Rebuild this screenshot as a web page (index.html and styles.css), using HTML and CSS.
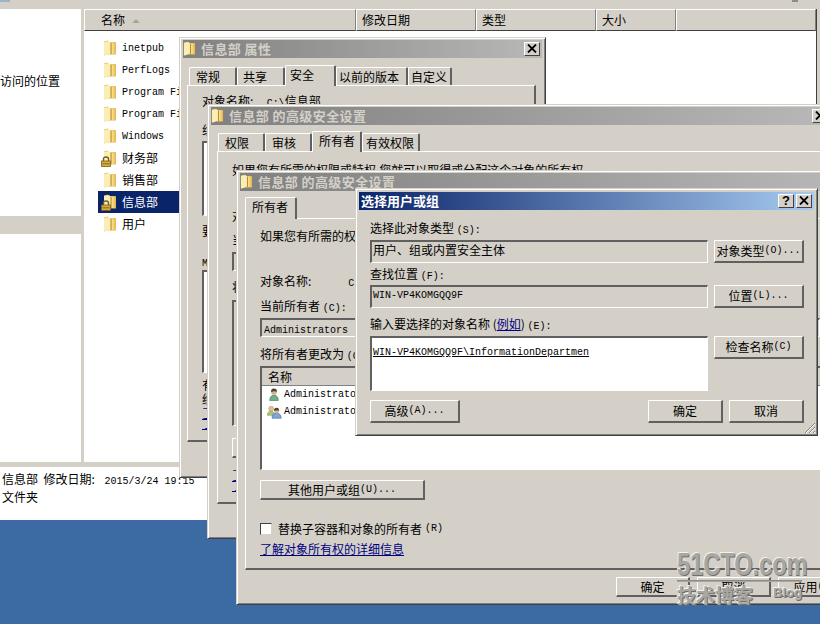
FILE: index.html
```html
<!DOCTYPE html>
<html lang="zh-CN">
<head>
  <meta charset="UTF-8" />
  <title>信息部 属性</title>
  <link rel="stylesheet" href="styles.css">
</head>
<body>

  <!-- icons -->
  <svg class="sprite" width="0" height="0">
    <defs>
      <linearGradient id="folderFill" x1="0" y1="0" x2="1" y2="0">
        <stop offset="0" stop-color="#fdf0b0"/>
        <stop offset="0.55" stop-color="#f6dc86"/>
        <stop offset="1" stop-color="#e8bb52"/>
      </linearGradient>
      <symbol id="folder" viewBox="0 0 14 16">
        <path d="M1 1.5 L5 0.5 L5 2 L12.5 2 L13 3 L13 14.5 L5 14.5 L1 15.5 Z" fill="#e2b655"/>
        <path d="M6 2.5 L12.5 2.5 L12.5 14 L6 14 Z" fill="url(#folderFill)"/>
        <path d="M1 2 L6 1 L7.5 2.5 L7.5 13.5 L2 15.5 L1 15 Z" fill="#fbeeb4"/>
        <path d="M7.5 2.5 L8.6 3 L8.6 14 L7.5 14 Z" fill="#b98a2c"/>
      </symbol>
      <symbol id="lock" viewBox="0 0 10 11">
        <path d="M2.5 5 L2.5 3 Q2.5 1 5 1 Q7.5 1 7.5 3 L7.5 5" fill="none" stroke="#6a5a30" stroke-width="1.4"/>
        <rect x="0.5" y="5" width="9" height="5.5" fill="#d8a93c" stroke="#7a5f18" stroke-width="0.8"/>
        <rect x="1.5" y="7.3" width="7" height="1" fill="#8a6c1e"/>
      </symbol>
      <symbol id="user" viewBox="0 0 14 16">
        <path d="M2 15 Q2 9 7 9 Q12 9 12 15 Z" fill="#6fb08a" stroke="#3f7a5a" stroke-width="0.7"/>
        <circle cx="7" cy="5" r="3.4" fill="#d9b28a"/>
        <path d="M3.6 5 Q3.4 1 7 1 Q10.6 1 10.4 5 Q8.6 3.2 3.6 5 Z" fill="#4a4238"/>
      </symbol>
      <symbol id="group" viewBox="0 0 18 16">
        <path d="M0.5 12 Q0.5 7 4.5 7 Q9 7 9 12 Z" fill="#a8c47c" stroke="#6e8c4c" stroke-width="0.6"/>
        <circle cx="5" cy="4" r="3" fill="#e4bf92" stroke="#a68a5e" stroke-width="0.5"/>
        <path d="M6 15.5 Q6 9.5 11.5 9.5 Q17 9.5 17 15.5 Z" fill="#7ea6d6" stroke="#41699c" stroke-width="0.7"/>
        <circle cx="11.5" cy="6.5" r="3" fill="#d9b28a"/>
        <path d="M8.5 6.5 Q8.3 3 11.5 3 Q14.7 3 14.5 6.5 Q12.8 5 8.5 6.5 Z" fill="#4a4238"/>
      </symbol>
      <symbol id="close" viewBox="0 0 10 9">
        <path d="M1 0.5 L9 8.5 M9 0.5 L1 8.5" stroke="#000" stroke-width="1.8" fill="none"/>
      </symbol>
    </defs>
  </svg>

  <!-- explorer behind the dialogs -->
  <div class="explorer">
    <div class="toolbar-strip">
      <span class="strip-bit"></span>
      <span class="strip-bit strip-bit-right"></span>
    </div>
    <div class="explorer-body">
      <div class="nav">
        <div class="nav-top"><span class="nav-label">访问的位置</span></div>
        <div class="nav-gap"></div>
        <div class="nav-bottom"></div>
      </div>
      <div class="files">
        <div class="file-head">
          <div class="col col-name">名称 <span class="sort-arrow"></span></div>
          <div class="col col-date">修改日期</div>
          <div class="col col-type">类型</div>
          <div class="col col-size">大小</div>
          <div class="col col-rest"></div>
        </div>
        <ul class="file-list">
          <li><svg class="folder-icon"><use href="#folder"/></svg><span class="m">inetpub</span></li>
          <li><svg class="folder-icon"><use href="#folder"/></svg><span class="m">PerfLogs</span></li>
          <li><svg class="folder-icon"><use href="#folder"/></svg><span class="m">Program Files</span></li>
          <li><svg class="folder-icon"><use href="#folder"/></svg><span class="m">Program Files (x86)</span></li>
          <li><svg class="folder-icon"><use href="#folder"/></svg><span class="m">Windows</span></li>
          <li><span class="icon-wrap"><svg class="folder-icon"><use href="#folder"/></svg><svg class="lock-icon"><use href="#lock"/></svg></span>财务部</li>
          <li><svg class="folder-icon"><use href="#folder"/></svg>销售部</li>
          <li class="selected"><span class="icon-wrap"><svg class="folder-icon"><use href="#folder"/></svg><svg class="lock-icon"><use href="#lock"/></svg></span>信息部</li>
          <li><svg class="folder-icon"><use href="#folder"/></svg>用户</li>
        </ul>
      </div>
    </div>
    <div class="status">
      <div>信息部&nbsp; 修改日期: <span class="m status-date">2015/3/24 19:15</span></div>
      <div>文件夹</div>
    </div>
  </div>

  <!-- 属性 -->
  <div class="win win-props">
    <div class="titlebar">
      <svg class="title-icon"><use href="#folder"/></svg>
      <span class="title-text">信息部&nbsp;属性</span>
      <span class="title-btn"><svg class="x-icon"><use href="#close"/></svg></span>
    </div>
    <div class="tabs tabs-props">
      <div class="tab">常规</div>
      <div class="tab">共享</div>
      <div class="tab active">安全</div>
      <div class="tab">以前的版本</div>
      <div class="tab">自定义</div>
    </div>
    <div class="panel panel-props">
      <p class="line">对象名称:&nbsp;&nbsp;&nbsp;&nbsp; <span class="m">C:\</span>信息部</p>
      <p class="line props-group">组或用户名(G):</p>
      <div class="sunken white box-a"></div>
      <p class="line props-change">要更改权限,请单击“编辑”。</p>
      <p class="line props-perm"><span class="m">MyUser</span> 的权限(P)</p>
      <div class="sunken white box-b"></div>
      <p class="line props-more">有关特殊权限或高级设置,<br>经单击“高级”。</p>
      <a class="link-line props-link1">了解访问控制和权限</a>
      <a class="link-line props-link2">了解访问控制和权限</a>
    </div>
  </div>

  <!-- 高级安全设置 -->
  <div class="win win-adv">
    <div class="titlebar">
      <svg class="title-icon"><use href="#folder"/></svg>
      <span class="title-text">信息部&nbsp;的高级安全设置</span>
      <span class="title-btn"><svg class="x-icon"><use href="#close"/></svg></span>
    </div>
    <div class="tabs tabs-adv">
      <div class="tab">权限</div>
      <div class="tab">审核</div>
      <div class="tab active">所有者</div>
      <div class="tab">有效权限</div>
    </div>
    <div class="panel panel-adv">
      <p class="line">如果您有所需的权限或特权,您就可以取得或分配这个对象的所有权。</p>
      <p class="line adv-name">对象名称:</p>
      <p class="line adv-cur">当前所有者(C):</p>
      <div class="sunken adv-box"></div>
      <p class="line adv-chg">将所有者更改为(O):</p>
      <div class="sunken adv-list"></div>
      <div class="btn adv-btn"></div>
      <a class="link-line adv-link1">了解</a>
      <a class="link-line adv-link2">了解</a>
    </div>
  </div>

  <!-- 高级安全设置 / 所有者 -->
  <div class="win win-owner">
    <div class="titlebar">
      <svg class="title-icon"><use href="#folder"/></svg>
      <span class="title-text">信息部&nbsp;的高级安全设置</span>
    </div>
    <div class="tabs tabs-owner">
      <div class="tab active">所有者</div>
    </div>
    <div class="panel panel-owner">
      <p class="line">如果您有所需的权限或特权,您就可以取得或分配这个对象的所有权。</p>
      <p class="line owner-name">对象名称:<span class="owner-path m">C:\</span></p>
      <p class="line owner-cur">当前所有者 <span class="m">(C):</span></p>
      <div class="sunken owner-box"><span class="m">Administrators</span></div>
      <p class="line owner-chg">将所有者更改为 <span class="m">(O):</span></p>
      <div class="sunken white owner-list">
        <div class="list-head">名称</div>
        <div class="list-row"><svg class="row-icon"><use href="#user"/></svg><span class="m">Administrator</span></div>
        <div class="list-row"><svg class="row-icon row-icon-group"><use href="#group"/></svg><span class="m">Administrators</span></div>
      </div>
      <div class="btn owner-other">其他用户或组 <span class="m">(U)...</span></div>
      <label class="check-row"><span class="checkbox"></span>替换子容器和对象的所有者 <span class="m">(R)</span></label>
      <a class="link owner-link">了解对象所有权的详细信息</a>
    </div>
    <div class="owner-actions">
      <div class="btn action">确定</div>
      <div class="btn action">取消</div>
      <div class="btn action">应用 <span class="m">(A)</span></div>
    </div>
  </div>

  <!-- 选择用户或组 -->
  <div class="win win-pick">
    <div class="titlebar titlebar-active">
      <span class="title-text pick-title">选择用户或组</span>
      <span class="title-btn help">?</span>
      <span class="title-btn"><svg class="x-icon"><use href="#close"/></svg></span>
    </div>
    <div class="pick-body">
      <p class="line pick-label first">选择此对象类型 <span class="m">(S):</span></p>
      <div class="pick-row">
        <div class="sunken field">用户、组或内置安全主体</div>
        <div class="btn side-btn">对象类型 <span class="m">(O)...</span></div>
      </div>
      <p class="line pick-label second">查找位置 <span class="m">(F):</span></p>
      <div class="pick-row">
        <div class="sunken field field-mono"><span class="m">WIN-VP4KOMGQQ9F</span></div>
        <div class="btn side-btn">位置 <span class="m">(L)...</span></div>
      </div>
      <p class="line pick-label third">输入要选择的对象名称 (<a class="link">例如</a>) <span class="m">(E):</span></p>
      <div class="pick-row">
        <div class="sunken white field names"><span class="m resolved">WIN-VP4KOMGQQ9F\InformationDepartmen</span></div>
        <div class="btn side-btn">检查名称 <span class="m">(C)</span></div>
      </div>
      <div class="pick-actions">
        <div class="btn adv-action">高级 <span class="m">(A)...</span></div>
        <div class="pick-right">
          <div class="btn ok-btn">确定</div>
          <div class="btn ok-btn">取消</div>
        </div>
      </div>
    </div>
    <svg class="grip" width="12" height="12" viewBox="0 0 12 12">
      <path d="M11 1 L1 11 M11 5 L5 11 M11 9 L9 11" stroke="#808080" stroke-width="1"/>
      <path d="M11 2 L2 11 M11 6 L6 11 M11 10 L10 11" stroke="#fff" stroke-width="1"/>
    </svg>
  </div>

  <!-- watermark -->
  <div class="watermark">
    <div class="wm-site">51CTO.com</div>
    <div class="wm-line"></div>
    <div class="wm-sub"><span class="wm-cn">技术博客</span><span class="wm-blog">Blog</span></div>
  </div>

</body>
</html>
```

FILE: styles.css
```css
* { box-sizing: border-box; }

html, body {
  margin: 0;
  width: 820px;
  height: 624px;
  overflow: hidden;
}

body {
  position: relative;
  background-color: #3b6ba2;
  font-family: "Noto Sans CJK SC", sans-serif;
  font-size: 12px;
  line-height: 14px;
  color: #000;
}

p { margin: 0; }

.sprite { position: absolute; }

/* half width latin text */
.m {
  font-family: "Liberation Mono", monospace;
  font-size: 10px;
}

/* Explorer */
.explorer {
  width: 820px;
  height: 519px;
  background-color: #d4d0c8;
  border-bottom: 1px solid #404040;
  display: flex;
  flex-direction: column;
}

.toolbar-strip {
  height: 9px;
  flex: none;
  display: flex;
  justify-content: space-between;
  padding: 0 22px 0 0;
}

.strip-bit {
  width: 10px;
  height: 2px;
  background-color: #9db4c4;
}

.strip-bit-right { width: 6px; background-color: #8e8c86; }

.explorer-body {
  display: flex;
  height: 453px;
  flex: none;
}

.nav {
  width: 81px;
  display: flex;
  flex-direction: column;
  flex: none;
}

.nav-top {
  height: 207px;
  background-color: #fff;
  padding-top: 65px;
}

.nav-gap { height: 18px; }

.nav-bottom { flex: 1; background-color: #fff; }

.files {
  margin-left: 3px;
  width: 733px;
  background-color: #fff;
  border-right: 1px solid #404040;
}

.file-head {
  display: flex;
  height: 22px;
  background-color: #d4d0c8;
}

.col {
  border-top: 1px solid #fff;
  border-left: 1px solid #fff;
  border-right: 1px solid #808080;
  border-bottom: 1px solid #404040;
  padding: 3px 0 0 5px;
}

.col-name { width: 272px; padding-left: 16px; }
.col-date { width: 120px; }
.col-type { width: 120px; }
.col-size { width: 80px; }
.col-rest { flex: 1; }

.sort-arrow {
  display: inline-block;
  margin: 0 0 2px 4px;
  border-left: 4px solid transparent;
  border-right: 4px solid transparent;
  border-bottom: 4px solid #a8a59c;
}

.file-list {
  list-style: none;
  margin: 0;
  padding: 6px 0 0 14px;
  width: 95px;
}

.file-list li {
  display: flex;
  align-items: center;
  height: 22px;
  white-space: nowrap;
  padding-left: 5px;
}

.file-list .m { margin-top: 2px; }

.file-list li.selected {
  background-color: #0a246a;
  color: #fff;
}

.folder-icon {
  width: 14px;
  height: 16px;
  margin-right: 5px;
  flex: none;
}

.icon-wrap { position: relative; display: flex; }

.lock-icon {
  position: absolute;
  left: -2px;
  top: 6px;
  width: 10px;
  height: 11px;
}

.status {
  height: 53px;
  margin-top: 5px;
  background-color: #fff;
  padding: 4px 0 0 2px;
  flex: none;
}

.status div { height: 18px; line-height: 16px; }

.status-date { margin-left: 7px; }

/* Dialog windows */
.win {
  position: absolute;
  background-color: #d4d0c8;
  border-top: 1px solid #d4d0c8;
  border-left: 1px solid #d4d0c8;
  border-right: 1px solid #404040;
  border-bottom: 1px solid #404040;
  box-shadow: inset 1px 1px 0 #fff, inset -1px -1px 0 #808080;
  padding: 2px 3px 3px;
  overflow: hidden;
}

.win-props { left: 179px; top: 37px; width: 367px; height: 441px; }
.win-adv { left: 207px; top: 104px; width: 627px; height: 435px; }
.win-owner { left: 236px; top: 170px; width: 620px; height: 435px; }
.win-pick { left: 355px; top: 188px; width: 463px; height: 248px; }

.titlebar {
  display: flex;
  align-items: center;
  height: 18px;
  padding: 0 2px 1px 0;
  background: linear-gradient(to right, #808080, #b8b8b8);
  color: #d4d0c8;
  font-weight: bold;
  font-size: 13px;
}

.titlebar-active {
  background: linear-gradient(to right, #0a246a, #a6caf0);
  color: #fff;
  margin-top: 1px;
  padding-left: 2px;
}

.title-icon { width: 13px; height: 15px; margin-right: 5px; flex: none; }

.title-text { flex: 1; white-space: nowrap; letter-spacing: 0.4px; }

.pick-title { font-size: 13px; letter-spacing: 0; }

.title-btn {
  display: flex;
  align-items: center;
  justify-content: center;
  width: 16px;
  height: 14px;
  margin-left: 2px;
  background-color: #d4d0c8;
  color: #000;
  font-size: 11px;
  font-weight: bold;
  border-top: 1px solid #fff;
  border-left: 1px solid #fff;
  border-right: 1px solid #404040;
  border-bottom: 1px solid #404040;
}

.x-icon { width: 10px; height: 9px; }

.help { font-family: "Liberation Sans", sans-serif; font-size: 13px; }

/* Tabs */
.tabs {
  display: flex;
  align-items: flex-end;
  position: relative;
  z-index: 1;
}

.tab {
  height: 18px;
  padding: 2px 0 0 6px;
  border-top: 1px solid #fff;
  border-left: 1px solid #fff;
  border-right: 2px solid #606060;
  border-radius: 2px 2px 0 0;
  white-space: nowrap;
}

.tab.active {
  height: 21px;
  margin-bottom: -1px;
  background-color: #d4d0c8;
}

.tabs-props { margin-top: 7px; padding-left: 6px; }
.tabs-props .tab { width: 48px; }
.tabs-props .tab:nth-child(2) { padding-left: 5px; }
.tabs-props .tab.active { width: 51px; padding: 2px 0 0 4px; }
.tabs-props .tab:nth-child(4) { width: 72px; padding-left: 2px; }
.tabs-props .tab:nth-child(5) { width: 44px; padding-left: 2px; }

.tabs-adv { margin-top: 6px; padding-left: 7px; }
.tabs-adv .tab { width: 47px; }
.tabs-adv .tab.active { width: 50px; }
.tabs-adv .tab:nth-child(4) { width: 58px; padding-left: 3px; }

.tabs-owner { margin-top: 6px; padding-left: 5px; }
.tabs-owner .tab.active { width: 52px; height: 22px; padding-top: 2px; }

.panel {
  border-top: 1px solid #fff;
  border-left: 1px solid #fff;
  border-right: 2px solid #606060;
  border-bottom: 2px solid #606060;
  padding-left: 14px;
}

.line { height: 14px; white-space: nowrap; }

.link-line {
  display: block;
  height: 14px;
  color: #00007f;
  text-decoration: underline;
  white-space: nowrap;
}

/* 属性 panel */
.panel-props { margin-left: 4px; width: 349px; height: 357px; padding-top: 8px; }
.props-group { margin-top: 15px; }
.box-a { height: 75px; margin-top: 4px; width: 300px; }
.props-change { margin-top: 8px; }
.props-perm { margin-top: 16px; }
.box-b { height: 103px; margin-top: 2px; width: 300px; }
.props-more { margin-top: 5px; height: 28px; }
.props-link2 { margin-top: -4px; }

/* 高级 panel */
.panel-adv { margin-left: 6px; width: 640px; height: 353px; padding-top: 11px; }
.adv-name { margin-top: 32px; }
.adv-cur { margin-top: 10px; }
.adv-box { height: 19px; margin-top: 5px; width: 300px; }
.adv-chg { margin-top: 9px; }
.adv-list { height: 126px; margin-top: 6px; width: 300px; }
.adv-btn { height: 20px; margin-top: 12px; width: 100px; }
.adv-link1 { margin-top: 12px; height: 10px; line-height: 10px; }
.adv-link2 { height: 10px; line-height: 10px; }

/* 所有者 panel */
.panel-owner { margin-left: 5px; width: 640px; height: 352px; padding-top: 10px; }
.owner-name { margin-top: 31px; }
.owner-path { margin-left: 37px; }
.owner-cur { margin-top: 11px; }
.owner-box { height: 19px; margin-top: 5px; width: 560px; padding: 1px 0 0 2px; }
.owner-chg { margin-top: 10px; }
.owner-list { height: 104px; margin-top: 5px; width: 610px; }

.list-head {
  height: 18px;
  background-color: #d4d0c8;
  padding: 2px 0 0 6px;
  border-bottom: 1px solid #808080;
}

.list-row {
  display: flex;
  align-items: center;
  height: 17px;
  padding-left: 6px;
  white-space: nowrap;
}

.row-icon { width: 12px; height: 15px; margin-right: 4px; flex: none; }
.row-icon-group { width: 15px; margin: 0 2px 0 -1px; height: 14px; }

.owner-other { width: 165px; height: 20px; margin-top: 10px; }

.check-row {
  display: flex;
  align-items: center;
  gap: 6px;
  margin-top: 22px;
  height: 14px;
  white-space: nowrap;
}

.check-row .m { margin-left: -3px; }

.checkbox {
  width: 12px;
  height: 12px;
  background-color: #fff;
  border-top: 1px solid #404040;
  border-left: 1px solid #404040;
  border-right: 1px solid #d4d0c8;
  border-bottom: 1px solid #d4d0c8;
  flex: none;
}

.link {
  color: #00007f;
  text-decoration: underline;
}

.owner-link { display: block; margin-top: 6px; height: 14px; }

.owner-actions {
  display: flex;
  gap: 7px;
  margin: 7px 0 0 376px;
}

.action { width: 74px; height: 20px; flex: none; }

/* Buttons and fields */
.btn {
  display: flex;
  align-items: center;
  justify-content: center;
  white-space: nowrap;
  background-color: #d4d0c8;
  border-top: 1px solid #fff;
  border-left: 1px solid #fff;
  border-right: 2px solid #606060;
  border-bottom: 2px solid #606060;
}

.sunken {
  border-top: 2px solid #606060;
  border-left: 2px solid #606060;
  border-right: 1px solid #fff;
  border-bottom: 1px solid #fff;
  white-space: nowrap;
  overflow: hidden;
}

.white { background-color: #fff; }

/* 选择用户或组 */
.pick-body { padding: 0 11px; }

.pick-label { height: 14px; }
.pick-label.first { margin-top: 11px; }
.pick-label.second { margin-top: 4px; }
.pick-label.third { margin-top: 9px; }

.pick-row {
  display: flex;
  justify-content: space-between;
  align-items: flex-start;
  margin-top: 5px;
}

.pick-label.second + .pick-row { margin-top: 4px; }

.field { width: 338px; height: 23px; padding: 0 0 0 1px; line-height: 16px; }
.field-mono { line-height: 12px; }
.names { height: 55px; padding-top: 4px; }
.resolved { text-decoration: underline; }
.side-btn { width: 90px; height: 23px; }

.pick-actions {
  display: flex;
  justify-content: space-between;
  margin-top: 9px;
}

.pick-right { display: flex; gap: 6px; }

.adv-action { width: 90px; height: 23px; }
.ok-btn { width: 75px; height: 23px; }

.win-pick .pick-row, .win-pick .pick-actions { width: 434px; }

.grip { position: absolute; right: 1px; bottom: 1px; }

/* watermark */
.watermark {
  position: absolute;
  left: 677px;
  top: 551px;
  width: 125px;
  color: #a9a7a2;
}

.wm-site {
  font-family: "Liberation Sans", sans-serif;
  font-size: 31px;
  font-weight: bold;
  line-height: 28px;
  white-space: nowrap;
  transform: scaleX(0.76);
  transform-origin: left center;
  text-shadow: 1px 1px 0 #6f6e6a, -1px -1px 0 #f4f2ee;
}

.wm-line {
  height: 2px;
  margin-top: 1px;
  background-color: #a9a7a2;
  border-top: 1px solid #8a8984;
}

.wm-sub {
  display: flex;
  align-items: flex-end;
  justify-content: space-between;
  margin-top: 1px;
}

.wm-cn {
  font-size: 19px;
  font-weight: bold;
  line-height: 24px;
  white-space: nowrap;
  text-shadow: 1px 1px 0 #6f6e6a, -1px -1px 0 #f4f2ee;
}

.wm-blog {
  font-family: "Liberation Sans", sans-serif;
  font-size: 13px;
  font-weight: bold;
  line-height: 20px;
  margin-bottom: 4px;
  text-shadow: 1px 1px 0 #6f6e6a, -1px -1px 0 #f4f2ee;
}
```
